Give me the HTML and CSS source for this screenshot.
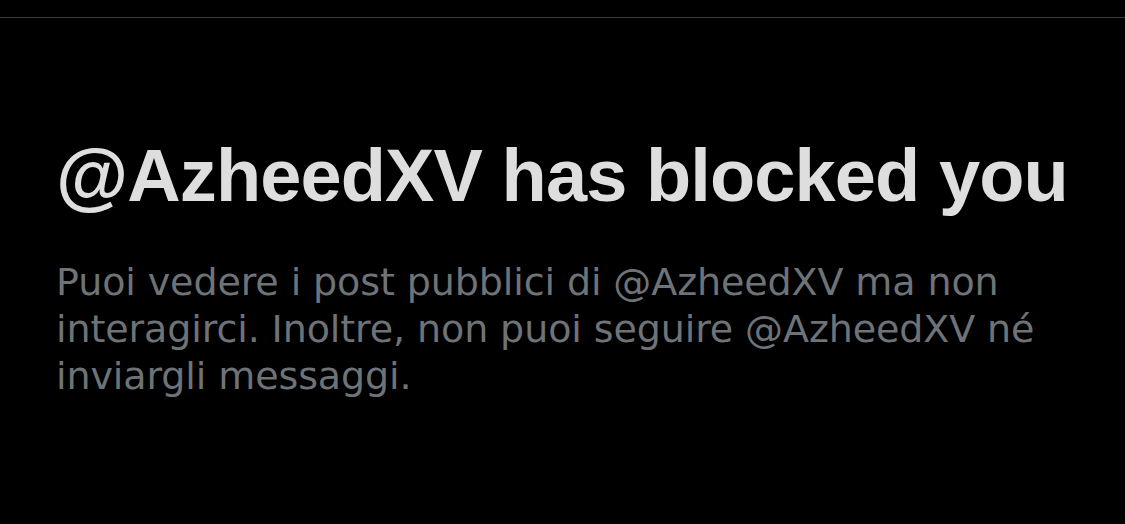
FILE: index.html
```html
<!DOCTYPE html>
<html>
<head>
<meta charset="utf-8">
<link rel="stylesheet" href="styles.css">
</head>
<body>
<div class="rule"></div>
<main class="content">
  <h1 class="title">@AzheedXV has blocked you</h1>
  <p class="desc">Puoi vedere i post pubblici di @AzheedXV ma non interagirci. Inoltre, non puoi seguire @AzheedXV né inviargli messaggi.</p>
</main>
</body>
</html>
```
FILE: styles.css
```css
html, body {
  margin: 0;
  padding: 0;
  background: #000;
  width: 1125px;
  height: 524px;
  overflow: hidden;
}
.rule {
  margin-top: 17px;
  height: 1px;
  background: #3b3b3b;
}
.content {
  padding: 0 56px;
}
.title {
  margin: 116px 0 0 0;
  font-family: "Liberation Sans", Arial, sans-serif;
  font-weight: 700;
  font-size: 74px;
  line-height: 84px;
  color: #dedede;
  letter-spacing: -0.9px;
  white-space: nowrap;
}
.desc {
  margin: 41px 0 0 0;
  font-family: "DejaVu Sans", sans-serif;
  font-size: 38px;
  line-height: 47px;
  color: #6e7378;
  width: 1012px;
  letter-spacing: -0.1px;
}
```
